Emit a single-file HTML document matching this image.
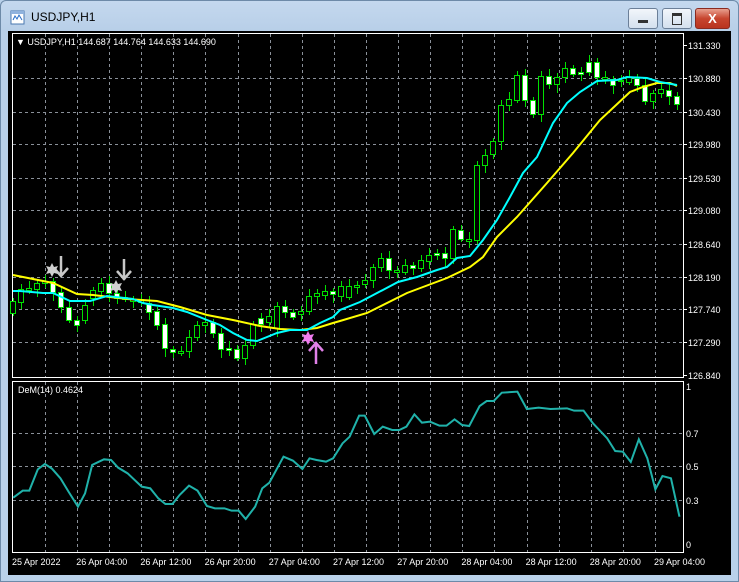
<!DOCTYPE html>
<html><head><meta charset="utf-8">
<style>
html,body{margin:0;padding:0;width:739px;height:582px;overflow:hidden;background:#b9d1ea;font-family:"Liberation Sans",sans-serif}
#win{position:absolute;left:0;top:0;width:737px;height:580px;border:1px solid #6d8aa8;border-radius:6px 6px 0 0;background:linear-gradient(#c4d8ee,#b8cfe8 30px,#b9d1ea)}
.t{position:absolute;left:30px;top:9px;font-size:12px;color:#000}
.btn{position:absolute;top:7px;height:19px;border:1px solid #6b7f98;border-radius:3px;background:linear-gradient(#f2f6fb,#d4e0ee)}
#chart{position:absolute;left:8px;top:31px;width:723px;height:544px;background:#000}
svg text{font-family:"Liberation Sans",sans-serif;font-size:10px;fill:#fff}
</style></head><body>
<div id="win">
<svg style="position:absolute;left:9px;top:9px" width="16" height="16"><rect x="1" y="1" width="13" height="13" fill="#fff" stroke="#4a78b0"/><path d="M3 10 L5 6 L7 9 L9 5 L12 10" stroke="#2a6fc8" fill="none"/><rect x="1" y="1" width="13" height="3" fill="#8fb2dd"/></svg>
<div class="t">USDJPY,H1</div>
<div class="btn" style="left:627px;width:28px"><div style="position:absolute;left:9px;top:11px;width:10px;height:3px;background:#333"></div></div>
<div class="btn" style="left:661px;width:28px"><div style="position:absolute;left:9px;top:4px;width:8px;height:8px;border:1px solid #333;border-top-width:3px"></div></div>
<div class="btn" style="left:694px;width:33px;border-color:#8a2a20;background:linear-gradient(#e8a08f,#c7452f 50%,#b9341f)"><div style="position:absolute;left:0;top:0;width:33px;text-align:center;color:#fff;font-weight:bold;font-size:13px;line-height:19px">X</div></div>
</div>
<div id="chart"></div>
<svg id="s" style="position:absolute;left:0;top:0" width="739" height="582">
<g id="grid" stroke="#8a9099" stroke-dasharray="3,3" stroke-width="1"></g>
<rect x="12.5" y="33.5" width="671" height="344" fill="none" stroke="#fff"/>
<rect x="12.5" y="381.5" width="671" height="171" fill="none" stroke="#fff"/>
<g id="candles"></g>
<polyline fill="none" stroke="#ffff00" stroke-width="2" points="13,275 33,279 53,283 77,294 93,295 127,299 157,301 180,307 207,315 233,320 260,326 280,329 300,330 317,328 333,323 340,321 367,313 407,293 447,278 470,267 483,257 497,237 517,217 547,183 573,153 600,120 630,92 643,87 657,83 670,83 677,86"/>
<polyline fill="none" stroke="#00ffff" stroke-width="2" points="13,291 20,291 43,293 53,293 70,301 90,301 107,296 133,299 143,303 153,305 173,308 187,312 207,320 220,325 233,333 247,340 257,341 267,337 277,333 290,330 307,330 320,323 333,317 340,310 360,302 398,282 417,277 437,270 447,267 457,258 470,256 483,240 497,220 510,197 523,173 537,157 553,123 567,103 580,92 597,81 617,80 627,77 647,78 660,82 677,85"/>
<g fill="none" stroke="#c8c8c8" stroke-width="2.5"><path d="M61 256 V276 M54 268 L61 276 L68 268"/><path d="M124 259 V280 M117 271 L124 279 L131 271"/></g>
<g fill="#d0d0d0"><polygon points="52,263 54,267 58,266 56,270 58,274 54,273 52,277 50,273 46,274 48,270 46,266 50,267"/><polygon points="116,280 118,284 122,283 120,287 122,291 118,290 116,294 114,290 110,291 112,287 110,283 114,284"/></g>
<polygon fill="#f07cf0" points="308,331 310,335 314,334 312,338 314,342 310,341 308,345 306,341 302,342 304,338 302,334 306,335"/>
<g fill="none" stroke="#e080e8" stroke-width="2.5"><path d="M316 364 V343 M309 351 L316 343 L323 351"/></g>
<svg x="0" y="370" width="739" height="212" viewBox="0 0 1564 636" preserveAspectRatio="none">
<polyline fill="none" stroke="#20b2aa" stroke-width="2" vector-effect="non-scaling-stroke" points="28,383 48,362 62,362 80,298 95,282 110,296 128,325 145,365 165,410 180,370 195,285 220,268 235,270 250,293 270,310 300,350 318,355 335,385 350,402 365,402 380,375 400,347 418,362 438,408 455,415 475,415 490,422 505,422 520,447 540,410 555,355 570,338 600,260 620,272 640,297 655,265 670,270 690,275 705,265 725,220 740,200 760,137 772,137 792,192 810,170 830,180 845,180 860,170 877,133 893,158 910,155 930,167 945,167 962,148 978,165 993,168 1015,108 1030,93 1045,93 1062,68 1095,65 1115,117 1140,113 1165,117 1200,115 1215,122 1235,122 1255,160 1285,205 1302,243 1318,245 1335,276 1352,208 1370,265 1387,358 1402,318 1420,325 1438,440"/>
</svg>
<text x="16" y="45" style="font-size:9px">▼ USDJPY,H1  144.687 144.764 144.633 144.690</text>
<text x="18" y="393" style="font-size:9px">DeM(14) 0.4624</text>
<g id="labels"></g>
</svg>
<script>
var ns="http://www.w3.org/2000/svg";
function el(p,t,a,tx){var e=document.createElementNS(ns,t);for(var k in a)e.setAttribute(k,a[k]);if(tx)e.textContent=tx;document.getElementById(p).appendChild(e);return e;}
var hy=[45,78,112,144,178,210,244,277,309,342,375];
var hl=["131.330","130.880","130.430","129.980","129.530","129.080","128.640","128.190","127.740","127.290","126.840"];
hy.forEach(function(y,i){if(i>0&&i<10)el("grid","line",{x1:13,x2:683,y1:y+.5,y2:y+.5});el("grid","line",{x1:683,x2:687,y1:y+.5,y2:y+.5,"stroke-dasharray":"none",stroke:"#fff"});el("labels","text",{x:688,y:y+4,style:"font-size:9px"},hl[i]);});
[[433,"0.7"],[466,"0.5"],[500,"0.3"]].forEach(function(a){el("grid","line",{x1:13,x2:683,y1:a[0]+.5,y2:a[0]+.5});el("labels","text",{x:686,y:a[0]+4,style:"font-size:9px"},a[1]);});
el("labels","text",{x:686,y:390,style:"font-size:9px"},"1");
el("labels","text",{x:686,y:548,style:"font-size:9px"},"0");
for(var x=45;x<683;x+=32.1){var xx=Math.round(x)+.5;el("grid","line",{x1:xx,x2:xx,y1:34,y2:377});el("grid","line",{x1:xx,x2:xx,y1:382,y2:552});}
var tl=["25 Apr 2022","26 Apr 04:00","26 Apr 12:00","26 Apr 20:00","27 Apr 04:00","27 Apr 12:00","27 Apr 20:00","28 Apr 04:00","28 Apr 12:00","28 Apr 20:00","29 Apr 04:00"];
tl.forEach(function(t,i){el("labels","text",{x:12+i*64.2,y:565,style:"font-size:9px"},t);});
var c=[[13,301,313,0],[21,289,302,0],[29,288,290,0],[37,283,289,0],[45,281,283,0],[53,281,292,1],[61,292,307,1],[69,307,320,1],[77,320,325,1],[85,305,320,0],[93,290,298,0],[101,283,291,0],[109,283,293,1],[117,293,298,1],[125,297,299,0],[133,299,301,0],[141,299,302,0],[149,303,312,1],[157,311,325,1],[165,324,348,1],[173,349,352,1],[181,351,353,0],[189,337,351,0],[197,325,337,0],[205,322,325,0],[213,322,333,1],[221,333,349,1],[229,348,350,1],[237,349,358,1],[245,345,358,0],[253,324,345,0],[261,318,324,1],[269,316,322,0],[277,306,328,0],[285,306,312,1],[293,312,317,1],[301,311,314,0],[309,296,311,0],[317,293,296,0],[325,291,295,0],[333,291,294,1],[341,286,296,0],[349,286,297,0],[357,285,287,0],[365,280,284,0],[373,267,280,0],[381,258,267,0],[389,258,270,1],[397,270,272,0],[405,265,272,0],[413,265,268,1],[421,260,268,0],[429,255,261,0],[437,253,255,1],[445,253,258,1],[453,229,258,0],[461,230,239,1],[469,239,241,0],[477,165,240,0],[485,155,165,0],[493,141,154,0],[501,105,141,0],[509,99,105,0],[517,75,100,0],[525,75,100,1],[533,100,114,1],[541,76,114,0],[549,76,84,1],[557,77,84,0],[565,68,77,0],[573,68,74,1],[581,72,74,1],[589,62,72,1],[597,62,77,1],[605,77,79,0],[613,79,85,1],[621,80,81,0],[629,77,82,0],[637,78,85,1],[645,85,101,1],[653,93,101,0],[661,89,93,0],[669,90,96,1],[677,96,104,1]];
c.forEach(function(d,i){var w1=3+(i*7%5),w2=3+(i*11%7);el("candles","line",{x1:d[0]+.5,x2:d[0]+.5,y1:d[1]-w1,y2:d[2]+w2,stroke:"#00e000"});var h=Math.max(d[2]-d[1],1);el("candles","rect",{x:d[0]-2.5,y:d[1]+.5,width:5,height:h,fill:d[3]?"#fff":"#000",stroke:"#00e000"});});
</script>
</body></html>
